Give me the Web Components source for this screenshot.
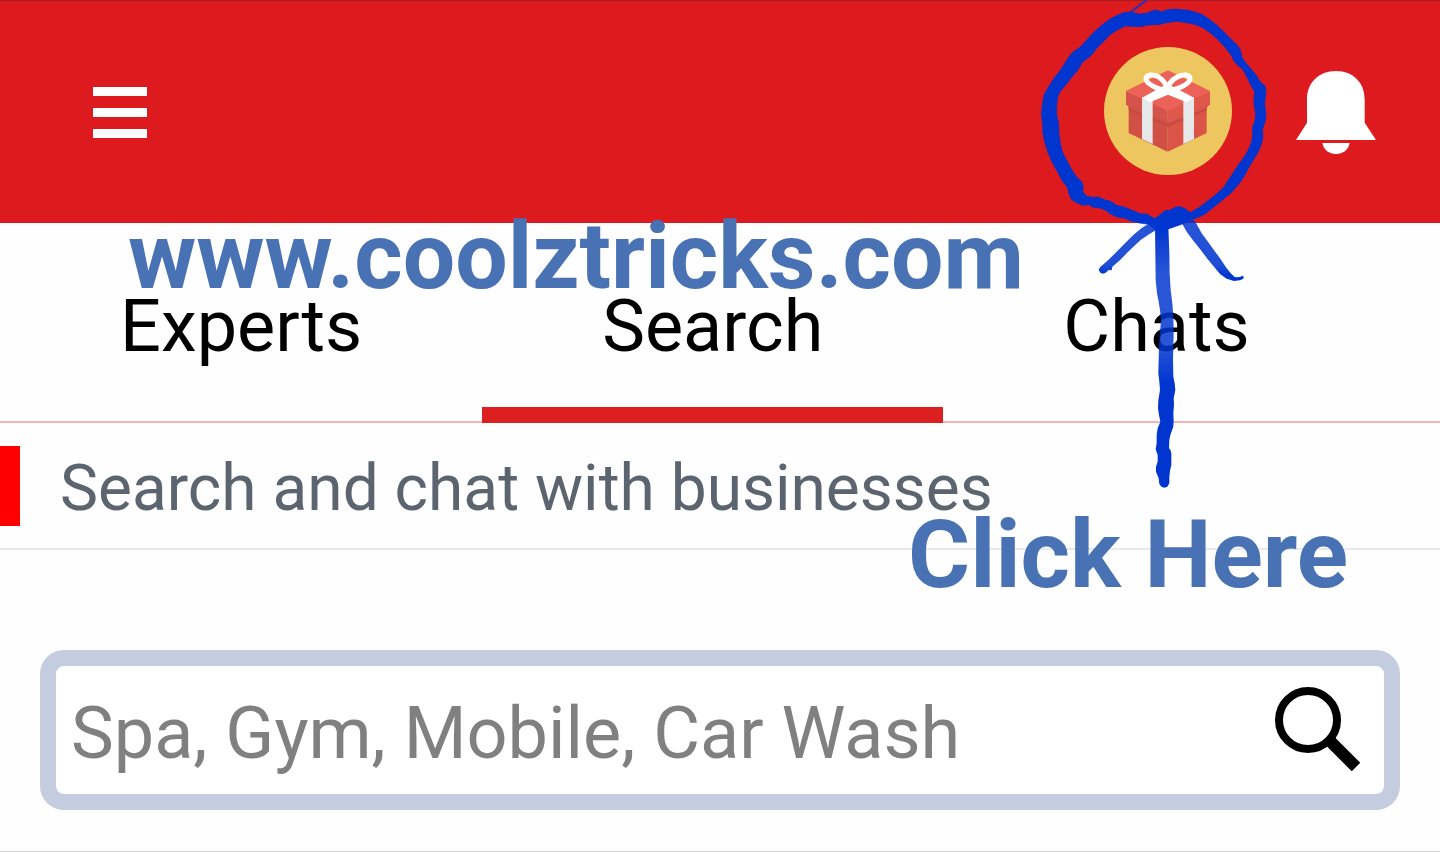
<!DOCTYPE html>
<html lang="en">
<head>
<meta charset="utf-8">
<meta name="viewport" content="width=device-width, initial-scale=1">
<title>Search</title>
<style>
  body {
    margin: 0;
    background: #fefefe;
    font-family: Roboto, "Liberation Sans", sans-serif;
  }
</style>
</head>
<body>
<chat-app>
  <app-header></app-header>
  <tab-bar>
    <tab-item>Experts</tab-item>
    <tab-item active>Search</tab-item>
    <tab-item>Chats</tab-item>
  </tab-bar>
  <section-title>Search and chat with businesses</section-title>
  <search-box placeholder="Spa, Gym, Mobile, Car Wash"></search-box>
  <text-note slot="notes" class="site">www.coolztricks.com</text-note>
  <text-note slot="notes" class="hint">Click Here</text-note>
  <pen-marks slot="notes"></pen-marks>
</chat-app>

<script>
// Page shell. Notes go in their own slot, they lie over the page content.
class ChatApp extends HTMLElement {
  constructor() {
    super();
    this.attachShadow({ mode: "open" });
    this.shadowRoot.innerHTML = `
    <style>
      :host {
        display: flex;
        flex-direction: column;
        position: relative;
      }
      main {
        display: flex;
        flex-direction: column;
        border-bottom: 1px solid #cfcfcf;
      }
      ::slotted(text-note), ::slotted(pen-marks) {
        position: absolute;
        pointer-events: none;
      }
      ::slotted(.site) {
        top: 201px;
        left: 128px;
        font-size: 93px;
      }
      ::slotted(.hint) {
        top: 499px;
        right: 92px;
        font-size: 95px;
      }
      ::slotted(pen-marks) {
        top: 0;
        right: 160px;
      }
    </style>
    <main><slot></slot></main>
    <slot name="notes"></slot>
    `;
  }
}

class AppHeader extends HTMLElement {
  constructor() {
    super();
    this.attachShadow({ mode: "open" });
    this.shadowRoot.innerHTML = `
    <style>
      :host {
        display: block;
      }
      header {
        display: flex;
        align-items: center;
        gap: 64px;
        padding: 47px 64px 48px 92px;
        background: #dd1a1d;
        box-shadow: inset 0 1px #a81c1f;
      }
      button {
        display: block;
        padding: 0;
        border: 0;
        background: none;
        cursor: pointer;
      }
      .menu {
        margin-right: auto;
      }
      svg {
        display: block;
      }
    </style>
    <header>
      <button class="menu" aria-label="Menu">
        <svg width="56" height="56" viewBox="0 0 56 56" fill="#fff">
          <path d="M1 4h54v9H1zM1 25h54v9H1zM1 46h54v9H1z"/>
        </svg>
      </button>
      <button aria-label="Rewards">
        <svg width="128" height="128" viewBox="0 0 384 384">
          <circle cx="192" cy="192" r="192" fill="#edc65f"/>
          <path d="M74 160L191 215V314L74 258z" fill="#d05045"/>
          <path d="M308 160L191 215V314L308 258z" fill="#da5548"/>
          <path d="M74 178L191 228L308 178V190L191 240L74 190z" fill="#c54b42"/>
          <path d="M66 132L191 188V230L76 182L66 172z" fill="#d4534a"/>
          <path d="M318 132L191 188V230L308 182L318 172z" fill="#df574b"/>
          <path d="M192 70L318 132L191 192L66 132z" fill="#ec6258"/>
          <path d="M114 152L146 158V291L114 276z" fill="#e6e7e9"/>
          <path d="M270 152L238 158V291L270 276z" fill="#e6e7e9"/>
          <path d="M114 152L190 110L270 152L248 166L192 143L138 166z" fill="#fff"/>
          <path d="M190 130C170 132 130 112 126 98C124 82 148 80 164 90C178 99 188 114 190 130C192 114 204 98 220 90C238 80 260 82 258 98C254 112 214 132 190 130z" fill="none" stroke="#fff" stroke-width="15" stroke-linejoin="round"/>
        </svg>
      </button>
      <button aria-label="Notifications">
        <svg width="80" height="90" viewBox="0 -12 240 270" fill="#fff">
          <path d="M33 158V88C33 38 68 3 120 3S206 38 206 88V158L240 210H0z"/>
          <path d="M79 219H161C157 240 141 252 120 252S83 240 79 219z"/>
        </svg>
      </button>
    </header>
    `;
  }
}

class TabBar extends HTMLElement {
  constructor() {
    super();
    this.attachShadow({ mode: "open" });
    this.shadowRoot.innerHTML = `
    <style>
      :host {
        display: block;
      }
      nav {
        display: flex;
        box-shadow: inset 0 -2px #f3b4b8;
      }
    </style>
    <nav><slot></slot></nav>
    `;
  }
}

class TabItem extends HTMLElement {
  constructor() {
    super();
    this.attachShadow({ mode: "open" });
    this.shadowRoot.innerHTML = `
    <style>
      :host {
        display: block;
      }
      button {
        display: block;
        padding: 62px 120px 38px;
        border: 0;
        border-bottom: 16px solid transparent;
        background: none;
        color: #000;
        font: inherit;
        font-size: 72px;
        line-height: 84px;
        cursor: pointer;
      }
      :host([active]) button {
        border-color: #dc1f1f;
      }
    </style>
    <button><slot></slot></button>
    `;
  }
}

class SectionTitle extends HTMLElement {
  constructor() {
    super();
    this.attachShadow({ mode: "open" });
    this.shadowRoot.innerHTML = `
    <style>
      :host {
        display: block;
        padding: 23px 0 22px;
        border-bottom: 2px solid #e9e9e9;
      }
      h1 {
        margin: 0;
        padding: 6px 0 0 40px;
        border-left: 20px solid #f00;
        color: #5c6470;
        font-size: 64px;
        font-weight: 400;
        line-height: 74px;
      }
    </style>
    <h1><slot></slot></h1>
    `;
  }
}

class SearchBox extends HTMLElement {
  constructor() {
    super();
    this.attachShadow({ mode: "open" });
    this.shadowRoot.innerHTML = `
    <style>
      :host {
        display: block;
        padding: 100px 40px 41px;
      }
      form {
        display: flex;
        align-items: center;
        padding: 0 24px 0 15px;
        border: 16px solid #c4cce0;
        border-radius: 24px;
        background: #fff;
      }
      input {
        flex: 1;
        min-width: 0;
        padding: 6px 0 0;
        border: 0;
        outline: 0;
        background: none;
        font: inherit;
        font-size: 72px;
        line-height: 84px;
        height: 122px;
      }
      input::placeholder {
        color: #808080;
        opacity: 1;
      }
      button {
        padding: 0;
        border: 0;
        background: none;
        cursor: pointer;
      }
      svg {
        display: block;
      }
    </style>
    <form>
      <input type="text" aria-label="Search businesses">
      <button type="button" aria-label="Search">
        <svg width="85" height="86" viewBox="0 0 85 86" fill="none" stroke="#000">
          <circle cx="33" cy="33" r="29" stroke-width="8"/>
          <path d="M54 53L81 80" stroke-width="12"/>
        </svg>
      </button>
    </form>
    `;
  }

  connectedCallback() {
    this.shadowRoot.querySelector("input").placeholder = this.getAttribute("placeholder") || "";
  }
}

class TextNote extends HTMLElement {
  constructor() {
    super();
    this.attachShadow({ mode: "open" });
    this.shadowRoot.innerHTML = `
    <style>
      :host {
        display: block;
        color: #4872b4;
        font-weight: 700;
        line-height: 112px;
        white-space: nowrap;
      }
    </style>
    <slot></slot>
    `;
  }
}

// Freehand ring and arrow, drawn at three units per pixel
class PenMarks extends HTMLElement {
  constructor() {
    super();
    this.attachShadow({ mode: "open" });
    this.shadowRoot.innerHTML = `
    <style>
      :host {
        display: block;
      }
      svg {
        display: block;
      }
    </style>
    <svg width="250" height="500" viewBox="0 0 750 1500" fill="#0035cf" aria-hidden="true">
      <defs>
        <linearGradient id="shaft" gradientUnits="userSpaceOnUse" x1="0" y1="680" x2="0" y2="1150">
          <stop offset="0" stop-color="#0035cf"/>
          <stop offset=".3" stop-color="#0035cf" stop-opacity=".84"/>
          <stop offset=".75" stop-color="#0035cf" stop-opacity=".84"/>
          <stop offset="1" stop-color="#0035cf"/>
        </linearGradient>
        <linearGradient id="wing" gradientUnits="userSpaceOnUse" x1="0" y1="670" x2="0" y2="825">
          <stop offset="0" stop-color="#0035cf" stop-opacity=".84"/>
          <stop offset=".8" stop-color="#0035cf" stop-opacity=".88"/>
          <stop offset="1" stop-color="#0035cf"/>
        </linearGradient>
      </defs>
      <path d="M300 38L352 -2" stroke="#3a2fa8" stroke-width="7"/>
      <path fill-rule="evenodd" stroke="#0035cf" stroke-width="2" stroke-linejoin="round" d="
        M300 36L330 42L352 39L365 33L378 30L395 35L412 29L435 27L470 30L495 36L515 43L538 58L560 75L582 96L600 115L622 135L632 152L636 172L650 192L668 212L680 228L690 245L706 259L708 275L704 310L708 345L706 362L697 390L699 410L695 430L685 455L670 480L655 505L642 530L625 554L605 577L580 598L550 622L528 640L510 650L490 657L455 673L420 685L400 691L380 690L367 683L355 673L328 669L300 662L285 655L262 651L240 641L226 630L210 624L190 622L175 614L160 616L140 608L124 598L118 585L112 562L98 544L85 520L68 490L55 460L45 430L38 395L38 370L34 345L37 315L42 285L55 262L72 235L95 205L118 168L132 154L150 142L170 120L190 98L215 76L240 57L262 46L280 38z
        M300 79L285 78L262 90L240 104L220 125L200 145L182 168L165 180L155 190L145 208L120 238L105 258L90 275L83 292L80 315L80 345L86 370L87 405L95 450L102 466L110 480L122 504L132 520L142 534L155 544L160 560L158 575L170 588L185 592L205 591L225 600L240 603L260 616L280 620L310 632L330 641L350 642L375 656L390 645L405 632L420 631L435 622L450 620L468 628L480 638L505 624L530 605L555 586L580 563L592 545L605 525L625 495L640 475L655 450L665 425L668 405L667 385L675 360L677 340L672 315L672 290L674 275L665 260L655 240L645 220L635 205L622 195L610 180L605 168L598 158L585 142L570 125L556 112L540 98L520 84L500 75L475 69L440 64L410 68L385 74L355 75L330 80z"/>
      <path fill="url(#shaft)" stroke="none" d="
        M375 680L376 760L377 840L381 880L385 900L390 930L393 960L390 1000L387 1040L386 1080L385 1120L388 1145L390 1170L385 1200L384 1225L387 1245L391 1265L383 1285L380 1305L380 1330L377 1348L383 1365L383 1385L378 1400L378 1415L386 1435L388 1452L394 1460L403 1463L412 1460L418 1450L418 1430L420 1412L424 1395L424 1360L421 1349L417 1345L418 1320L421 1305L430 1280L431 1262L430 1240L432 1215L431 1195L436 1170L434 1150L430 1130L429 1080L431 1000L430 950L427 910L422 870L419 820L418 760L415 680z"/>
      <path fill="url(#wing)" d="M365 666L335 684L310 705L285 730L260 755L235 780L210 802L206 810L211 818L219 821L227 818L236 810L245 811L247 800L268 782L290 760L310 740L332 720L355 704L378 690z"/>
      <path fill="url(#wing)" d="M455 668L470 695L490 722L510 747L532 776L552 800L570 822L590 836L612 843L630 841L640 836L641 830L637 827L630 831L615 832L602 820L590 805L570 775L550 748L530 720L515 700L493 660z"/>
      <path d="M375 656L390 645L405 632L420 631L435 622L450 620L468 628L480 638L493 657L420 685L380 690z"/>
    </svg>
    `;
  }
}

customElements.define("chat-app", ChatApp);
customElements.define("app-header", AppHeader);
customElements.define("tab-bar", TabBar);
customElements.define("tab-item", TabItem);
customElements.define("section-title", SectionTitle);
customElements.define("search-box", SearchBox);
customElements.define("text-note", TextNote);
customElements.define("pen-marks", PenMarks);
</script>
</body>
</html>
